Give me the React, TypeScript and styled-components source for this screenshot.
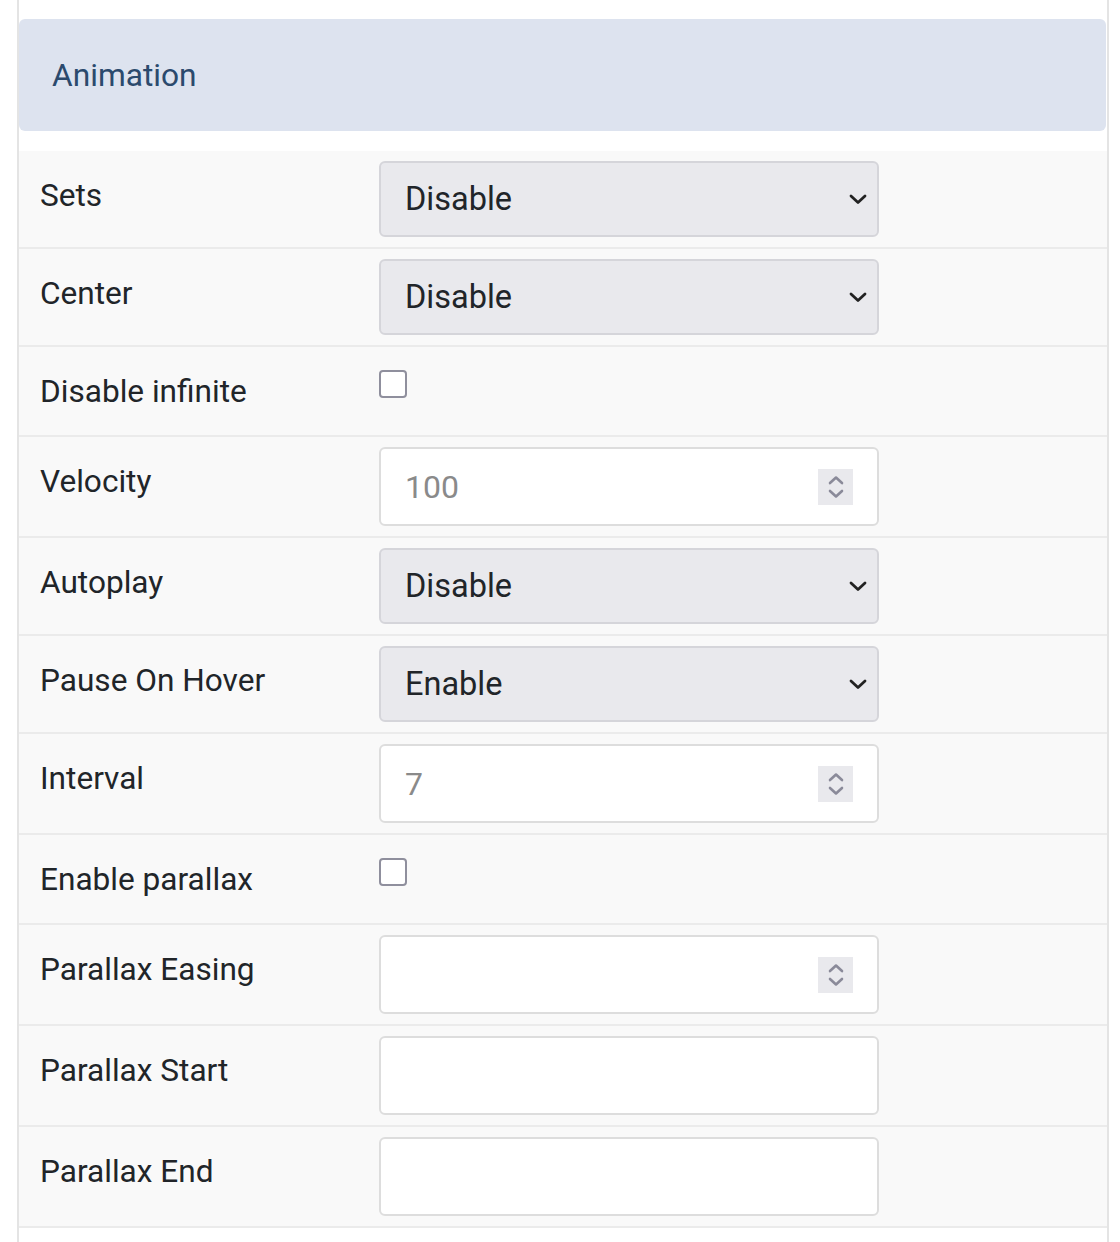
import React from "react";
import styled, { createGlobalStyle } from "styled-components";

const GlobalStyle = createGlobalStyle`
  html, body {
    margin: 0;
    padding: 0;
    background: #ffffff;
  }
  body {
    font-family: Roboto, "Liberation Sans", Arial, sans-serif;
    color: #212529;
  }
  * { box-sizing: border-box; }
`;

const Panel = styled.div`
  margin-left: 17px;
  width: 1092px;
  min-height: 1242px;
  border-left: 2px solid #e4e4e4;
  border-right: 2px solid #e4e4e4;
  padding-top: 19px;
`;

const Header = styled.div`
  height: 112px;
  margin-right: 1px;
  background: #dde3ef;
  border-radius: 6px;
  display: flex;
  align-items: center;
  padding-left: 33px;
  font-size: 31.7px;
  color: #2b4a6d;
`;

const Fields = styled.div`
  margin-top: 20px;
  display: flex;
  flex-direction: column;
`;

const Row = styled.div`
  display: grid;
  grid-template-columns: 360px 500px;
  align-items: start;
  background: #f9f9f9;
  border-bottom: 2px solid #ebebeb;
`;

const Label = styled.div`
  padding: 21.5px 0 21.5px 21px;
  font-size: 31.6px;
  line-height: 45px;
  color: #212529;
`;

const Control = styled.div<{ $top?: number }>`
  padding: ${(p) => p.$top ?? 10}px 0 10px 0;
  display: flex;
`;

const SelectBox = styled.div`
  width: 500px;
  height: 76px;
  background: #e9e9ed;
  border: 2px solid #d5d5da;
  border-radius: 6px;
  display: flex;
  align-items: center;
  justify-content: space-between;
  padding: 0 9px 0 24px;
  font-size: 32.5px;
  color: #212529;
`;

const InputBox = styled.div`
  width: 500px;
  height: 79px;
  background: #ffffff;
  border: 2px solid #dddddd;
  border-radius: 6px;
  display: flex;
  align-items: center;
  padding: 0 24px 0 24px;
`;

const TextInput = styled.input`
  flex: 1;
  min-width: 0;
  border: none;
  outline: none;
  background: transparent;
  padding: 0;
  font-family: Roboto, "Liberation Sans", Arial, sans-serif;
  font-size: 32px;
  color: #8a8a8a;
`;

const Spinner = styled.div`
  width: 35px;
  height: 36px;
  background: #e9e9ed;
  display: flex;
  align-items: center;
  justify-content: center;
`;

const Checkbox = styled.div`
  width: 28px;
  height: 28px;
  border: 2px solid #8f8f9d;
  border-radius: 4px;
  background: #ffffff;
`;

const Chevron = () => (
  <svg width="20" height="12" viewBox="0 0 20 12" fill="none">
    <path d="M3 3 L10 9.5 L17 3" stroke="#222" strokeWidth="2.8" strokeLinecap="round" strokeLinejoin="round" />
  </svg>
);

const SpinIcon = () => (
  <svg width="18" height="28" viewBox="0 0 18 28" fill="none">
    <path d="M3 10 L9 4.5 L15 10" stroke="#8a8a99" strokeWidth="2.6" strokeLinecap="round" strokeLinejoin="round" />
    <path d="M3 18 L9 23.5 L15 18" stroke="#8a8a99" strokeWidth="2.6" strokeLinecap="round" strokeLinejoin="round" />
  </svg>
);

type Field =
  | { kind: "select"; label: string; value: string }
  | { kind: "check"; label: string }
  | { kind: "number"; label: string; value: string }
  | { kind: "text"; label: string; value: string };

const fields: Field[] = [
  { kind: "select", label: "Sets", value: "Disable" },
  { kind: "select", label: "Center", value: "Disable" },
  { kind: "check", label: "Disable infinite" },
  { kind: "number", label: "Velocity", value: "100" },
  { kind: "select", label: "Autoplay", value: "Disable" },
  { kind: "select", label: "Pause On Hover", value: "Enable" },
  { kind: "number", label: "Interval", value: "7" },
  { kind: "check", label: "Enable parallax" },
  { kind: "number", label: "Parallax Easing", value: "" },
  { kind: "text", label: "Parallax Start", value: "" },
  { kind: "text", label: "Parallax End", value: "" },
];

const renderControl = (f: Field) => {
  switch (f.kind) {
    case "select":
      return (
        <Control>
          <SelectBox>
            <span>{f.value}</span>
            <Chevron />
          </SelectBox>
        </Control>
      );
    case "check":
      return (
        <Control $top={23}>
          <Checkbox />
        </Control>
      );
    case "number":
      return (
        <Control>
          <InputBox>
            <TextInput readOnly value={f.value} />
            <Spinner>
              <SpinIcon />
            </Spinner>
          </InputBox>
        </Control>
      );
    default:
      return (
        <Control>
          <InputBox>
            <TextInput readOnly value={f.value} />
          </InputBox>
        </Control>
      );
  }
};

export default function App() {
  return (
    <>
      <GlobalStyle />
      <Panel>
        <Header>Animation</Header>
        <Fields>
          {fields.map((f) => (
            <Row key={f.label}>
              <Label>{f.label}</Label>
              {renderControl(f)}
            </Row>
          ))}
        </Fields>
      </Panel>
    </>
  );
}
